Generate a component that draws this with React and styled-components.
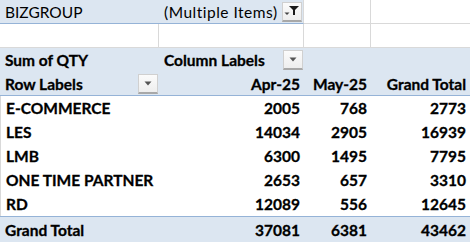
import React from 'react';
import styled, { createGlobalStyle } from 'styled-components';

const GlobalStyle = createGlobalStyle`
    html, body {
        margin: 0;
        padding: 0;
        background: #ffffff;
    }
    body {
        font-family: 'Lato', 'Liberation Sans', sans-serif;
        color: #000000;
    }
`;

const colors = {
    band: '#dce6f1',
    bandLine: '#95b3d7',
    grid: '#d9d9d9',
};

const COLUMNS = '159px 145px 67px 99px';

const Sheet = styled.div`
    width: 470px;
    height: 242px;
    overflow: hidden;
    display: flex;
    flex-direction: column;
`;

const Row = styled.div`
    display: grid;
    grid-template-columns: ${COLUMNS};
    height: ${props => props.height || 24}px;
    box-sizing: border-box;
    background: ${props => (props.band ? colors.band : '#ffffff')};
    border-bottom: ${props => (props.line ? `1px solid ${colors.bandLine}` : 'none')};
    border-top: ${props => (props.topLine ? `1px solid ${colors.bandLine}` : 'none')};
`;

const Cell = styled.div`
    display: flex;
    align-items: center;
    justify-content: ${props => (props.right ? 'flex-end' : 'space-between')};
    box-sizing: border-box;
    padding: 0 ${props => (props.right ? 4 : 1)}px 0 ${props => (props.right ? 1 : 5)}px;
    font-size: 15.5px;
    font-weight: ${props => (props.bold ? 700 : 400)};
    -webkit-text-stroke: ${props => (props.bold ? '0.3px #000' : '0')};
    white-space: nowrap;
    background: ${props => (props.band ? colors.band : 'transparent')};
    border-right: ${props => (props.gridRight ? `1px solid ${colors.grid}` : 'none')};
    border-bottom: ${props =>
        props.bandLine ? `1px solid ${colors.bandLine}` : props.gridBottom ? `1px solid ${colors.grid}` : 'none'};
    border-left: ${props => (props.gridLeft ? `1px solid ${colors.grid}` : 'none')};
`;

const FilterText = styled.span`
    letter-spacing: 0.5px;
`;

const DropButton = styled.div`
    width: 20px;
    height: 20px;
    flex-shrink: 0;
    box-sizing: border-box;
    display: flex;
    align-items: center;
    justify-content: center;
    background: linear-gradient(#fbfbfb, #eeeeee);
    border: 1px solid #d0d0d0;
    border-bottom: 2px solid #a8a8a8;
`;

const Arrow = () => (
    <svg width="8" height="5" viewBox="0 0 8 5">
        <path d="M0.5 0.5 L7.5 0.5 L4 4.5 Z" fill="#555555" />
    </svg>
);

const Funnel = () => (
    <svg width="16" height="12" viewBox="0 0 16 12">
        <path d="M5 1 H15 L11 5 V10 H9 V5 Z" fill="#1a1a1a" />
        <path d="M0.5 7.5 H5.5 L3 10 Z" fill="#444444" />
    </svg>
);

const rows = [
    { label: 'E-COMMERCE', apr: 2005, may: 768, total: 2773 },
    { label: 'LES', apr: 14034, may: 2905, total: 16939 },
    { label: 'LMB', apr: 6300, may: 1495, total: 7795 },
    { label: 'ONE TIME PARTNER', apr: 2653, may: 657, total: 3310 },
    { label: 'RD', apr: 12089, may: 556, total: 12645 },
];

const totals = rows.reduce(
    (acc, r) => ({ apr: acc.apr + r.apr, may: acc.may + r.may, total: acc.total + r.total }),
    { apr: 0, may: 0, total: 0 }
);

const App = () => (
    <>
        <GlobalStyle />
        <Sheet>
            {/* report filter */}
            <Row>
                <Cell band bandLine>BIZGROUP</Cell>
                <Cell band bandLine gridRight>
                    <FilterText>(Multiple Items)</FilterText>
                    <DropButton><Funnel /></DropButton>
                </Cell>
                <Cell gridRight gridBottom />
                <Cell gridBottom />
            </Row>

            <Row>
                <Cell gridRight gridBottom />
                <Cell gridRight gridBottom />
                <Cell gridRight gridBottom />
                <Cell gridBottom />
            </Row>

            {/* pivot header */}
            <Row band>
                <Cell bold>Sum of QTY</Cell>
                <Cell bold>
                    <span>Column Labels</span>
                    <DropButton><Arrow /></DropButton>
                </Cell>
                <Cell />
                <Cell />
            </Row>

            <Row band line>
                <Cell bold>
                    <span>Row Labels</span>
                    <DropButton><Arrow /></DropButton>
                </Cell>
                <Cell bold right>Apr-25</Cell>
                <Cell bold right>May-25</Cell>
                <Cell bold right>Grand Total</Cell>
            </Row>

            {rows.map(r => (
                <Row key={r.label}>
                    <Cell bold gridLeft>{r.label}</Cell>
                    <Cell bold right>{r.apr}</Cell>
                    <Cell bold right>{r.may}</Cell>
                    <Cell bold right>{r.total}</Cell>
                </Row>
            ))}

            <Row band topLine height={26}>
                <Cell bold>Grand Total</Cell>
                <Cell bold right>{totals.apr}</Cell>
                <Cell bold right>{totals.may}</Cell>
                <Cell bold right>{totals.total}</Cell>
            </Row>
        </Sheet>
    </>
);

export default App;
